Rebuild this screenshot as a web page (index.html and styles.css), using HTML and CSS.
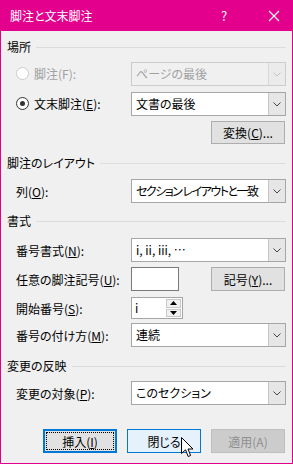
FILE: index.html
```html
<!DOCTYPE html>
<html lang="ja">
<head>
    <meta charset="UTF-8">
    <title>脚注と文末脚注</title>
    <link rel="stylesheet" href="styles.css">
</head>
<body>
    <div class="dialog">
        <div class="titlebar">
            <span class="title">脚注と文末脚注</span>
            <span class="help">?</span>
            <span class="close">
                <svg width="12" height="12" viewBox="0 0 12 12"><path d="M1 1 L11 11 M11 1 L1 11" stroke="#fff" stroke-width="1.2" fill="none"/></svg>
            </span>
        </div>

        <div class="content">
            <div class="group-title first"><span>場所</span><div class="rule"></div></div>

            <div class="row row-place1">
                <div class="label">
                    <span class="radio disabled"><span class="dot"></span>脚注(F):</span>
                </div>
                <div class="combo disabled">
                    <span class="combo-text">ページの最後</span>
                    <span class="combo-arrow"><svg width="8" height="5" viewBox="0 0 8 5"><path d="M0.5 0.5 L4 4 L7.5 0.5" stroke="#c4c4c4" fill="none"/></svg></span>
                </div>
            </div>

            <div class="row row-place2">
                <div class="label">
                    <span class="radio checked"><span class="dot"></span>文末脚注(<u>E</u>):</span>
                </div>
                <div class="combo">
                    <span class="combo-text">文書の最後</span>
                    <span class="combo-arrow"><svg width="8" height="5" viewBox="0 0 8 5"><path d="M0.5 0.5 L4 4 L7.5 0.5" stroke="#444" fill="none"/></svg></span>
                </div>
            </div>

            <div class="row row-convert">
                <button class="btn push-right">変換(<u>C</u>)...</button>
            </div>

            <div class="group-title layout"><span>脚注のレイアウト</span><div class="rule"></div></div>

            <div class="row row-columns">
                <div class="label">列(<u>O</u>):</div>
                <div class="combo">
                    <span class="combo-text narrow">セクション レイアウトと一致</span>
                    <span class="combo-arrow"><svg width="8" height="5" viewBox="0 0 8 5"><path d="M0.5 0.5 L4 4 L7.5 0.5" stroke="#444" fill="none"/></svg></span>
                </div>
            </div>

            <div class="group-title format"><span>書式</span><div class="rule"></div></div>

            <div class="row row-numfmt">
                <div class="label">番号書式(<u>N</u>):</div>
                <div class="combo">
                    <span class="combo-text">i, ii, iii, ⋯</span>
                    <span class="combo-arrow"><svg width="8" height="5" viewBox="0 0 8 5"><path d="M0.5 0.5 L4 4 L7.5 0.5" stroke="#444" fill="none"/></svg></span>
                </div>
            </div>

            <div class="row row-custom">
                <div class="label">任意の脚注記号(<u>U</u>):</div>
                <div class="textbox"></div>
                <button class="btn push-right">記号(<u>Y</u>)...</button>
            </div>

            <div class="row row-start">
                <div class="label">開始番号(<u>S</u>):</div>
                <div class="spinner">
                    <span class="spinner-text">i</span>
                    <span class="spin-buttons">
                        <span class="spin-up"><svg width="7" height="4" viewBox="0 0 7 4"><path d="M0 4 L3.5 0 L7 4 Z" fill="#000"/></svg></span>
                        <span class="spin-down"><svg width="7" height="4" viewBox="0 0 7 4"><path d="M0 0 L3.5 4 L7 0 Z" fill="#000"/></svg></span>
                    </span>
                </div>
            </div>

            <div class="row row-numbering">
                <div class="label">番号の付け方(<u>M</u>):</div>
                <div class="combo">
                    <span class="combo-text">連続</span>
                    <span class="combo-arrow"><svg width="8" height="5" viewBox="0 0 8 5"><path d="M0.5 0.5 L4 4 L7.5 0.5" stroke="#444" fill="none"/></svg></span>
                </div>
            </div>

            <div class="group-title apply"><span>変更の反映</span><div class="rule"></div></div>

            <div class="row row-target">
                <div class="label">変更の対象(<u>P</u>):</div>
                <div class="combo">
                    <span class="combo-text">このセクション</span>
                    <span class="combo-arrow"><svg width="8" height="5" viewBox="0 0 8 5"><path d="M0.5 0.5 L4 4 L7.5 0.5" stroke="#444" fill="none"/></svg></span>
                </div>
            </div>

            <div class="actions">
                <button class="btn default"><span class="focus">挿入(<u>I</u>)</span></button>
                <button class="btn hover">閉じる</button>
                <button class="btn" disabled>適用(A)</button>
            </div>
        </div>

        <!-- mouse pointer over the close button -->
        <svg class="cursor" width="13" height="21" viewBox="0 0 13 21">
            <path d="M0.5 0.5 L0.5 16.5 L4.5 12.8 L7.2 19.5 L9.6 18.5 L7 12 L12 12 Z" fill="#fff" stroke="#000" stroke-width="1" stroke-linejoin="miter"/>
        </svg>
    </div>
</body>
</html>
```

FILE: styles.css
```css
body {
    margin: 0;
    font-family: "Noto Sans CJK JP", "Noto Sans", sans-serif;
    font-size: 12px;
    font-feature-settings: "palt";
    color: #000;
    background: #f0f0f0;
}
.dialog {
    position: relative;
    width: 293px;
    height: 464px;
    box-sizing: border-box;
    background: #f0f0f0;
    border: 1px solid #e3008c;
    border-top: none;
}
.titlebar {
    height: 31px;
    margin: 0 -1px;
    background: #e3008c;
    color: #fff;
    display: flex;
    align-items: center;
}
.title {
    padding-left: 10px;
    flex: 1;
    font-size: 12px;
}
.help {
    width: 12px;
    margin-right: 35px;
    font-size: 13px;
}
.close {
    display: flex;
    margin-right: 13px;
}
.content {
    padding: 0 6px;
}
.group-title {
    display: flex;
    align-items: center;
    height: 16px;
    line-height: 16px;
}
.group-title .rule {
    flex: 1;
    height: 1px;
    margin-left: 5px;
    background: #dcdcdc;
}
.group-title.first { margin-top: 8px; }
.group-title.layout { margin-top: 11px; }
.group-title.format { margin-top: 10px; }
.group-title.apply { margin-top: 11px; }

.row {
    display: flex;
    align-items: center;
    height: 24px;
}
.row-place1 { margin-top: 7px; }
.row-place2 { margin-top: 6px; }
.row-convert { margin-top: 5px; height: 23px; }
.row-columns { margin-top: 8px; }
.row-numfmt { margin-top: 9px; }
.row-custom { margin-top: 5px; }
.row-start { margin-top: 6px; height: 22px; }
.row-numbering { margin-top: 4px; }
.row-target { margin-top: 7px; }

.label {
    flex: none;
    width: 124px;
    padding-left: 9px;
    box-sizing: border-box;
    white-space: nowrap;
}
u {
    text-decoration: underline;
    text-underline-offset: 1px;
}
.radio {
    display: inline-flex;
    align-items: center;
}
.radio .dot {
    width: 11px;
    height: 11px;
    border: 1px solid #333;
    border-radius: 50%;
    background: #fff;
    margin-right: 5px;
    position: relative;
}
.radio.checked .dot::after {
    content: "";
    position: absolute;
    left: 3px;
    top: 3px;
    width: 5px;
    height: 5px;
    border-radius: 50%;
    background: #333;
}
.radio.disabled {
    color: #a0a0a0;
}
.radio.disabled .dot {
    border-color: #cccccc;
}

.combo {
    flex: 1;
    min-width: 0;
    height: 24px;
    box-sizing: border-box;
    border: 1px solid #a6a6a6;
    background: #fff;
    display: flex;
}
.combo-text {
    flex: 1;
    min-width: 0;
    padding-left: 4px;
    line-height: 22px;
    white-space: nowrap;
    overflow: hidden;
}
.combo-text.narrow {
    letter-spacing: -1.5px;
}
.combo-arrow {
    flex: none;
    width: 16px;
    background: #e6e6e6;
    border-left: 1px solid #c6c6c6;
    display: flex;
    align-items: center;
    justify-content: center;
}
.combo.disabled {
    background: #f0f0f0;
    border-color: #cccccc;
    color: #a0a0a0;
}
.combo.disabled .combo-arrow {
    background: #ebebeb;
    border-left-color: #d9d9d9;
}

.textbox {
    width: 48px;
    height: 24px;
    box-sizing: border-box;
    border: 1px solid #7a7a7a;
    background: #fff;
}
.spinner {
    width: 52px;
    height: 22px;
    box-sizing: border-box;
    border: 1px solid #a6a6a6;
    background: #fff;
    display: flex;
}
.spinner-text {
    flex: 1;
    padding-left: 3px;
    line-height: 20px;
}
.spin-buttons {
    width: 15px;
    display: flex;
    flex-direction: column;
    padding: 1px 1px 1px 0;
    gap: 1px;
}
.spin-up, .spin-down {
    flex: 1;
    background: #f0f0f0;
    border: 1px solid #c8c8c8;
    display: flex;
    align-items: center;
    justify-content: center;
}

.btn {
    width: 74px;
    height: 24px;
    box-sizing: border-box;
    padding: 0;
    font: inherit;
    font-feature-settings: "palt";
    color: #000;
    background: #e1e1e1;
    border: 1px solid #adadad;
}
.row-convert .btn { height: 23px; }
.push-right {
    margin-left: auto;
    margin-right: 1px;
}
.actions {
    display: flex;
    justify-content: flex-end;
    gap: 10px;
    margin-top: 24px;
    padding-right: 1px;
}
.btn.default {
    border: 2px solid #0078d7;
    padding: 1px;
}
.btn.default .focus {
    display: flex;
    align-items: center;
    justify-content: center;
    height: 100%;
    box-sizing: border-box;
    border: 1px dotted #000;
}
.btn.hover {
    background: #e5f1fb;
    border-color: #0078d7;
}
.btn:disabled {
    background: #cccccc;
    border-color: #bfbfbf;
    color: #8f8f8f;
}
.cursor {
    position: absolute;
    left: 180px;
    top: 437px;
}
```
